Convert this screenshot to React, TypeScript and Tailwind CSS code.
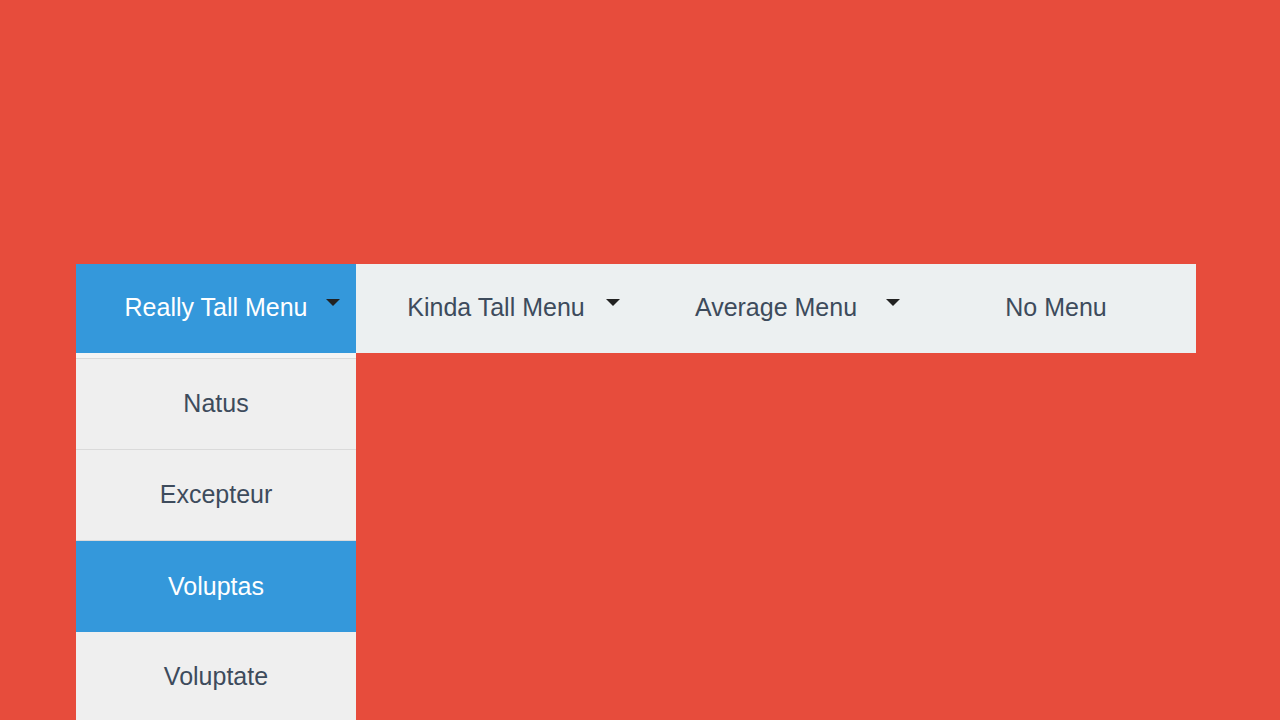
export default function App() {
  const menus = [
    { label: "Really Tall Menu", caret: true, active: true },
    { label: "Kinda Tall Menu", caret: true, active: false },
    { label: "Average Menu", caret: true, active: false },
    { label: "No Menu", caret: false, active: false },
  ];
  const items = ["Natus", "Excepteur", "Voluptas", "Voluptate"];

  return (
    <div
      className="w-[1280px] h-[720px] overflow-hidden bg-[#e74c3c] pt-[264px] pl-[76px]"
      style={{ fontFamily: '"Liberation Sans", Arial, sans-serif' }}
    >
      <nav className="relative flex w-[1120px] h-[89px] bg-[#ecf0f1]">
        {menus.map((m) => (
          <div
            key={m.label}
            className={`relative flex w-[280px] items-center justify-center pb-[2px] text-[25px] ${
              m.active ? "bg-[#3498db] text-white" : "text-[#3d4b5c]"
            }`}
          >
            {m.label}
            {m.caret && (
              <span className="absolute right-[16px] top-[35px] h-0 w-0 border-x-[7px] border-t-[7px] border-x-transparent border-t-[#222]" />
            )}
            {m.active && (
              <ul className="absolute left-0 top-[89px] w-[280px] bg-[#efefef]">
                <li className="h-[6px] bg-[#f4f4f4] border-b border-[#dadada]" />
                {items.map((it) => (
                  <li
                    key={it}
                    className={`flex h-[91px] items-center justify-center ${
                      it === "Voluptas"
                        ? "bg-[#3498db] text-white"
                        : "text-[#3d4b5c] border-b border-[#dadada]"
                    }`}
                  >
                    {it}
                  </li>
                ))}
              </ul>
            )}
          </div>
        ))}
      </nav>
    </div>
  );
}
